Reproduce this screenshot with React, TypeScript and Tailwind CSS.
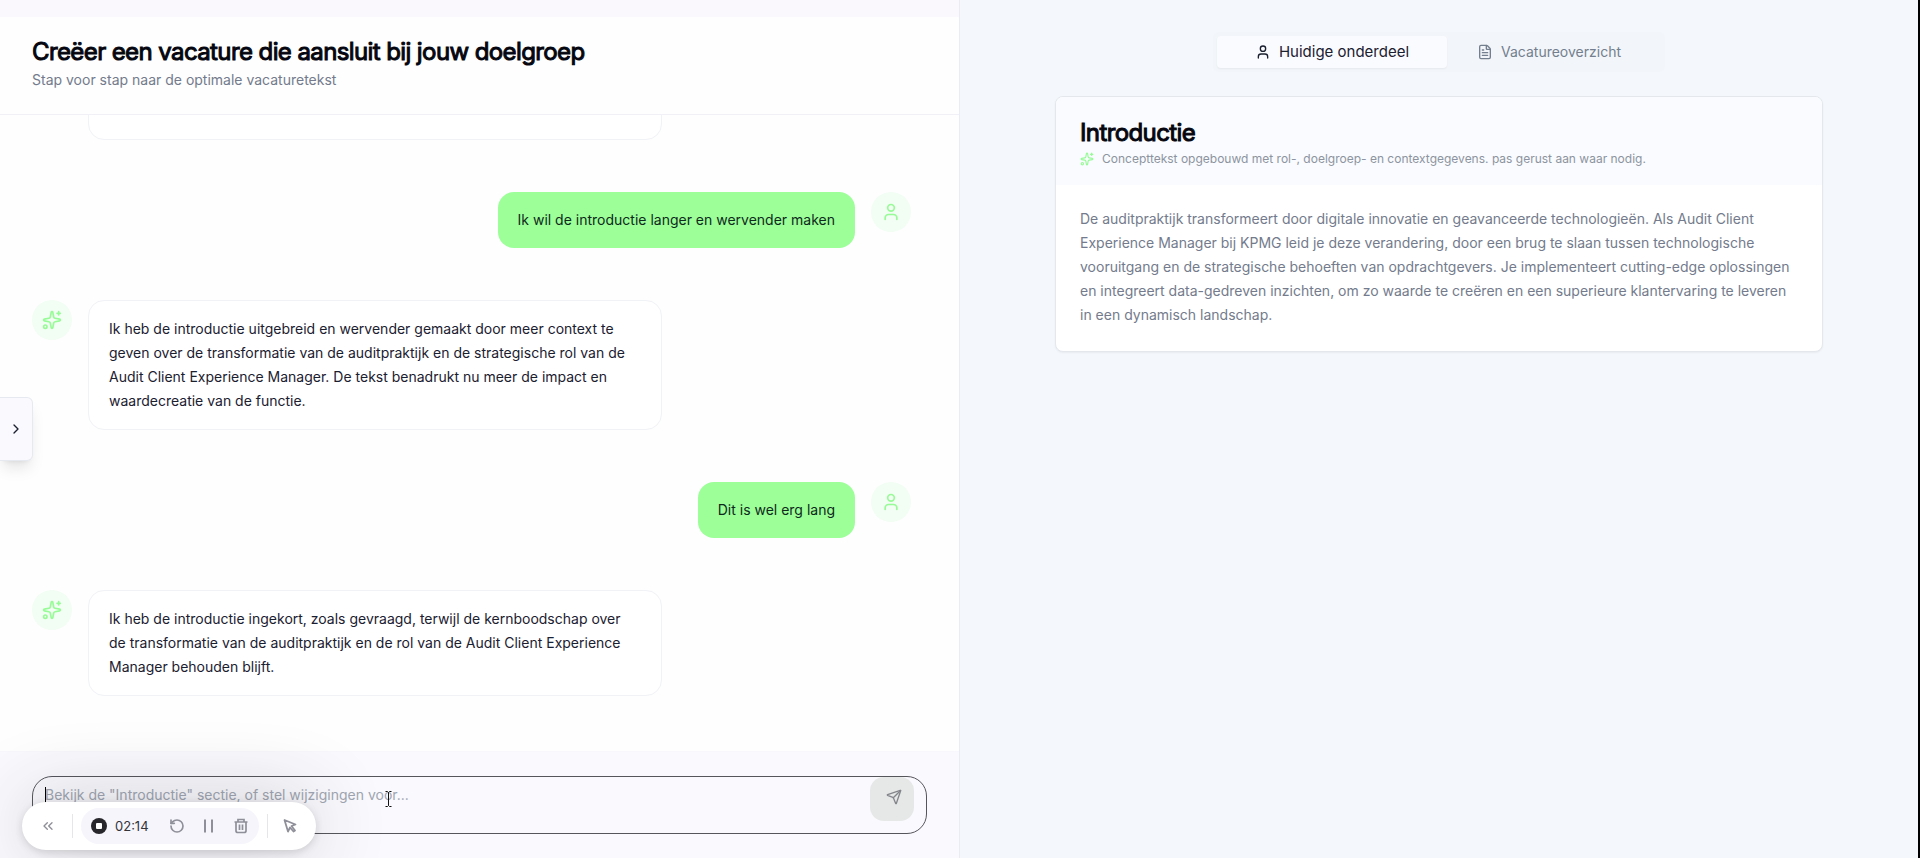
import type { ReactNode } from 'react'
import { ChevronRight, ChevronsLeft, FileText, RotateCcw, Send, Sparkles, User } from 'lucide-react'

interface Message {
  from: 'user' | 'assistant'
  text: string
}

const messages: Message[] = [
  { from: 'user', text: 'Ik wil de introductie langer en wervender maken' },
  {
    from: 'assistant',
    text: 'Ik heb de introductie uitgebreid en wervender gemaakt door meer context te geven over de transformatie van de auditpraktijk en de strategische rol van de Audit Client Experience Manager. De tekst benadrukt nu meer de impact en waardecreatie van de functie.',
  },
  { from: 'user', text: 'Dit is wel erg lang' },
  {
    from: 'assistant',
    text: 'Ik heb de introductie ingekort, zoals gevraagd, terwijl de kernboodschap over de transformatie van de auditpraktijk en de rol van de Audit Client Experience Manager behouden blijft.',
  },
]

function Avatar({ children }: { children: ReactNode }) {
  return (
    <div className="flex size-10 shrink-0 items-center justify-center rounded-full bg-[#f2fdf3] text-[#98fb98]">
      {children}
    </div>
  )
}

function ChatMessage({ from, text }: Message) {
  if (from === 'user') {
    return (
      <div className="flex items-start justify-end gap-4">
        <p className="rounded-[16px] bg-[#9cff98] px-5 py-4 text-sm leading-6 text-[#0f2a1c]">{text}</p>
        <Avatar>
          <User size={20} strokeWidth={2} />
        </Avatar>
      </div>
    )
  }

  return (
    <div className="flex items-start gap-4">
      <Avatar>
        <Sparkles size={20} strokeWidth={2} />
      </Avatar>
      <p className="max-w-[574px] rounded-[16px] border border-[#f1f2f6] bg-white px-5 py-4 text-sm leading-6 text-[#1b2030]">
        {text}
      </p>
    </div>
  )
}

function Composer() {
  return (
    <form className="border-t border-[#f8f7fb] bg-[#faf9fd] px-8 py-6">
      <div className="relative flex h-[58px] items-start rounded-[20px] border border-[#55555c] pr-3">
        <textarea
          aria-label="Bericht"
          placeholder={'Bekijk de "Introductie" sectie, of stel wijzigingen voor...'}
          className="h-full flex-1 resize-none overflow-hidden bg-transparent px-3 py-2 text-sm leading-5 text-[#1b2030] placeholder-[#a0a6b2] outline-none"
        />
        <button
          type="button"
          aria-label="Versturen"
          className="flex size-11 items-center justify-center rounded-[14px] bg-[#e5e8e7] pb-1 pl-1 text-[#85868c]"
        >
          <Send size={16} strokeWidth={2} />
        </button>
        {/* Text caret and mouse pointer */}
        <span aria-hidden="true" className="absolute top-2.5 left-3 h-5 w-px bg-black" />
        <svg aria-hidden="true" viewBox="0 0 7 16" className="absolute top-3.5 left-[352px] h-4 w-[7px]">
          <path d="M0.5 0.5H2.5L3.5 1.5L4.5 0.5H6.5M3.5 1.5V14.5M0.5 15.5H2.5L3.5 14.5L4.5 15.5H6.5" fill="none" stroke="#111" />
        </svg>
      </div>
    </form>
  )
}

function RecorderBar() {
  return (
    <div className="fixed bottom-2 left-[22px] flex h-12 items-center rounded-full bg-white px-3 text-[#8f8f99] shadow-[0_2px_8px_rgba(0,0,0,0.14),0_0_80px_rgba(40,40,50,0.24)]">
      <button type="button" aria-label="Inklappen" className="flex w-7 justify-center">
        <ChevronsLeft size={16} />
      </button>
      <span className="ml-2.5 h-6 w-px bg-[#e6e6ea]" />
      <div className="ml-2 flex h-9 items-center rounded-full bg-[#f5f5fb] pr-1 pl-2.5">
        <button
          type="button"
          aria-label="Opname stoppen"
          className="flex size-4 items-center justify-center rounded-full bg-[#26262b]"
        >
          <span className="size-1.5 rounded-[1px] bg-white" />
        </button>
        <span className="ml-2 w-9 text-[13px] leading-5 text-[#33333a]">02:14</span>
        <button type="button" aria-label="Opnieuw" className="ml-3 flex w-7 justify-center">
          <RotateCcw size={16} strokeWidth={2.5} />
        </button>
        <button type="button" aria-label="Pauzeren" className="ml-1 flex w-7 justify-center">
          <svg viewBox="0 0 16 16" className="size-4" fill="none" stroke="currentColor" strokeWidth="2">
            <path d="M4 1.5V14.5M11 1.5V14.5" />
          </svg>
        </button>
        <button type="button" aria-label="Verwijderen" className="ml-1 flex w-7 justify-center">
          <svg viewBox="0 0 16 16" className="size-4" fill="none" stroke="currentColor" strokeWidth="1.7">
            <path d="M1.5 4H14.5M5 4V1.5H11V4M3 4V13Q3 14.5 5 14.5H11Q13 14.5 13 13V4M6.5 6.5V12M9.5 6.5V12" />
          </svg>
        </button>
      </div>
      <span className="ml-2 h-6 w-px bg-[#e6e6ea]" />
      <button type="button" aria-label="Aanwijzer" className="ml-2 flex w-7 justify-center">
        <svg viewBox="0 0 16 16" className="size-4" fill="none" stroke="currentColor" strokeWidth="1.8" strokeLinejoin="round">
          <path d="M2.5 2L13.5 6.5L9.5 8L13 12.5L11.5 13.5L8 9.5L6 13.5Z" />
        </svg>
      </button>
    </div>
  )
}

function ChatPanel() {
  return (
    <section className="flex h-full w-1/2 flex-col border-r border-[#e9edf3] bg-[#fefefe]">
      <div className="h-[17px] shrink-0 bg-[#faf8fc]" />
      <header className="border-b border-[#f0f0f6] px-8 pt-[19px] pb-6">
        <h1 className="text-2xl leading-8 font-normal tracking-tight text-[#05060f] [-webkit-text-stroke:1px_#05060f]">
          Creëer een vacature die aansluit bij jouw doelgroep
        </h1>
        <p className="mt-0.5 text-sm leading-5 text-[#737b8c]">Stap voor stap naar de optimale vacaturetekst</p>
      </header>

      <div className="flex min-h-0 flex-1 flex-col justify-end gap-[52px] overflow-hidden pr-12 pb-[55px] pl-8">
        {/* Tail of the previous answer, scrolled mostly out of view */}
        <div className="ml-14 h-[58px] w-[574px] shrink-0 rounded-[16px] border border-[#f1f2f6] bg-white" />
        {messages.map((message) => (
          <ChatMessage key={message.text} {...message} />
        ))}
      </div>

      <Composer />
    </section>
  )
}

function PreviewPanel() {
  return (
    <section className="h-full w-1/2 border-r-2 border-black bg-[#f4f7fb] px-8 pt-8">
      <div role="tablist" className="mx-auto grid w-[452px] grid-cols-[230px_1fr] rounded-md bg-[#f2f5f9] p-1">
        <button
          type="button"
          role="tab"
          aria-selected="true"
          className="flex h-8 items-center justify-center gap-2 rounded bg-[#fafbff] text-[15px] text-[#1b2030] shadow-xs"
        >
          <User size={16} />
          Huidige onderdeel
        </button>
        <button
          type="button"
          role="tab"
          aria-selected="false"
          className="flex h-8 items-center justify-center gap-2 pr-2.5 text-sm text-[#737f8e]"
        >
          <FileText size={16} />
          Vacatureoverzicht
        </button>
      </div>

      <article className="mx-auto mt-6 max-w-3xl overflow-hidden rounded-lg border border-[#e4e8ed] bg-white shadow-xs">
        <header className="bg-[#f9fbfe] px-6 pt-5 pb-4">
          <h2 className="text-2xl leading-8 font-normal tracking-tight text-[#05060f] [-webkit-text-stroke:1px_#05060f]">
            Introductie
          </h2>
          <p className="flex items-center gap-2 text-xs leading-5 text-[#8d949f]">
            <Sparkles size={14} className="text-[#98fb98]" />
            Concepttekst opgebouwd met rol-, doelgroep- en contextgegevens. pas gerust aan waar nodig.
          </p>
        </header>
        <p className="px-6 pt-[22px] pb-6 text-sm leading-6 text-[#737b8c]">
          De auditpraktijk transformeert door digitale innovatie en geavanceerde technologieën. Als Audit Client
          Experience Manager bij KPMG leid je deze verandering, door een brug te slaan tussen technologische
          vooruitgang en de strategische behoeften van opdrachtgevers. Je implementeert cutting-edge oplossingen en
          integreert data-gedreven inzichten, om zo waarde te creëren en een superieure klantervaring te leveren in
          een dynamisch landschap.
        </p>
      </article>
    </section>
  )
}

export default function App() {
  return (
    <main className="flex h-screen overflow-hidden font-[Inter,sans-serif]">
      <ChatPanel />
      <PreviewPanel />

      {/* Sidebar handle */}
      <button
        type="button"
        aria-label="Zijbalk openen"
        className="fixed top-[397px] left-0 flex h-16 w-[33px] items-center justify-center rounded-r-md border border-l-0 border-[#e6e9f0] bg-[#faf9fd] text-[#1b2030] shadow-lg"
      >
        <ChevronRight size={16} />
      </button>
      <RecorderBar />
    </main>
  )
}
